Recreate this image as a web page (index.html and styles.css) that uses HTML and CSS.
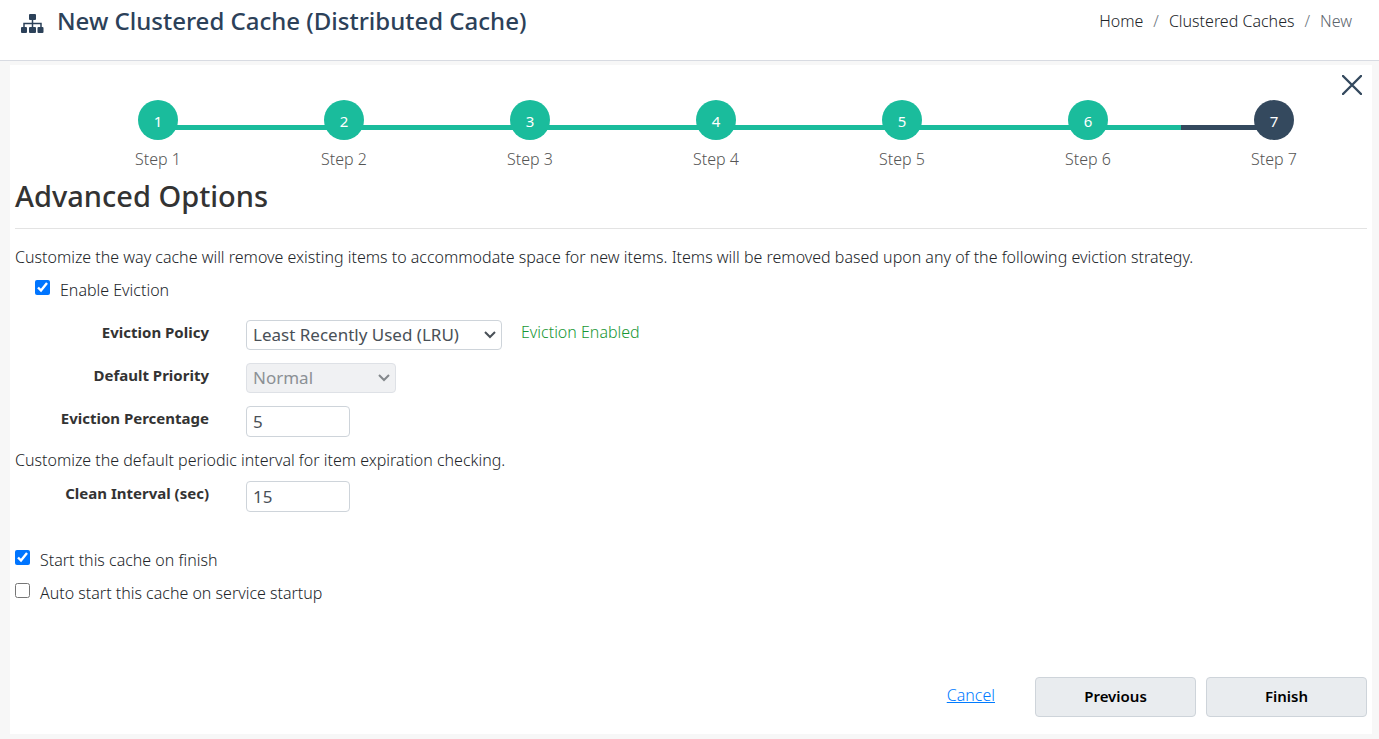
FILE: index.html
```html
<!DOCTYPE html>
<html lang="en">
<head>
<meta charset="utf-8">
<title>New Clustered Cache</title>
<link rel="stylesheet" href="styles.css">
</head>
<body>
<header class="topbar">
  <h1 class="page-title">
    <svg class="title-icon" viewBox="0 0 24 21" aria-hidden="true">
      <rect x="9" y="0" width="7" height="6" rx="1"/>
      <path d="M12.500 6v7M4 13V9.500h17V13" fill="none" stroke="#2c4159" stroke-width="1.500"/>
      <rect x="1" y="13" width="6" height="6" rx="1"/>
      <rect x="9" y="13" width="7" height="6" rx="1"/>
      <rect x="17.500" y="13" width="6" height="6" rx="1"/>
    </svg>
    New Clustered Cache (Distributed Cache)
  </h1>
  <nav aria-label="Breadcrumb">
    <ol class="breadcrumb">
      <li><a href="#">Home</a></li>
      <li><a href="#">Clustered Caches</a></li>
      <li class="current" aria-current="page">New</li>
    </ol>
  </nav>
</header>
<main class="card">
  <button class="close" type="button" aria-label="Close">
    <svg viewBox="0 0 20 20" aria-hidden="true"><path d="M1 1L19 19M19 1L1 19"/></svg>
  </button>
  <ol class="steps">
    <li class="step"><span class="dot">1</span><span>Step 1</span></li>
    <li class="step"><span class="dot">2</span><span>Step 2</span></li>
    <li class="step"><span class="dot">3</span><span>Step 3</span></li>
    <li class="step"><span class="dot">4</span><span>Step 4</span></li>
    <li class="step"><span class="dot">5</span><span>Step 5</span></li>
    <li class="step"><span class="dot">6</span><span>Step 6</span></li>
    <li class="step active" aria-current="step"><span class="dot">7</span><span>Step 7</span></li>
  </ol>
  <h2 class="section-title">Advanced Options</h2>
  <form class="options">
    <p class="intro">Customize the way cache will remove existing items to accommodate space for new items. Items will be removed based upon any of the following eviction strategy.</p>
    <div class="check indented">
      <input type="checkbox" id="eviction" checked>
      <label for="eviction">Enable Eviction</label>
    </div>
    <div class="fields">
      <div class="field">
        <label for="policy">Eviction Policy</label>
        <select id="policy" class="control wide"><option>Least Recently Used (LRU)</option></select>
        <span class="status">Eviction Enabled</span>
      </div>
      <div class="field">
        <label for="priority">Default Priority</label>
        <select id="priority" class="control medium" disabled><option>Normal</option></select>
      </div>
      <div class="field">
        <label for="percentage">Eviction Percentage</label>
        <input id="percentage" class="control narrow" type="text" value="5">
      </div>
    </div>
    <p class="intro">Customize the default periodic interval for item expiration checking.</p>
    <div class="fields interval">
      <div class="field">
        <label for="interval">Clean Interval (sec)</label>
        <input id="interval" class="control narrow" type="text" value="15">
      </div>
    </div>
    <div class="start-options">
      <div class="check">
        <input type="checkbox" id="start" checked>
        <label for="start">Start this cache on finish</label>
      </div>
      <div class="check">
        <input type="checkbox" id="autostart">
        <label for="autostart">Auto start this cache on service startup</label>
      </div>
    </div>
    <div class="actions">
      <a class="cancel" href="#">Cancel</a>
      <button class="btn" type="button">Previous</button>
      <button class="btn" type="button">Finish</button>
    </div>
  </form>
</main>
</body>
</html>
```
FILE: styles.css
```css
* { box-sizing: border-box; }

body {
  margin: 0;
  min-height: 100vh;
  display: flex;
  flex-direction: column;
  background: #f7f7f7;
  color: #212529;
  font: 300 16px/24px "Noto Sans", "Open Sans", sans-serif;
}

h1, h2, p, ol { margin: 0; padding: 0; }
ol { list-style: none; }

.topbar {
  display: flex;
  justify-content: space-between;
  align-items: flex-start;
  height: 61px;
  padding: 6px 27px 0 20px;
  background: #fff;
  border-bottom: 1px solid #d8dbe2;
}

.page-title {
  display: flex;
  align-items: center;
  gap: 13px;
  color: #2c4159;
  font-size: 24px;
  font-weight: 500;
  line-height: 30px;
}

.title-icon {
  width: 24px;
  height: 21px;
  margin-top: 7px;
  fill: #2c4159;
}

.breadcrumb {
  display: flex;
  padding-top: 3px;
}

.breadcrumb a {
  color: #212529;
  text-decoration: none;
}

.breadcrumb li + li::before {
  content: "/";
  padding: 0 10px;
  color: #6c757d;
}

.breadcrumb .current { color: #5c656d; }

.card {
  position: relative;
  flex: 1;
  display: flex;
  flex-direction: column;
  margin: 4px 7px 5px 10px;
  padding: 35px 5px 17px;
  background: #fff;
}

.close {
  position: absolute;
  top: 10px;
  right: 10px;
  width: 20px;
  height: 20px;
  padding: 0;
  border: 0;
  background: none;
  cursor: pointer;
}

.close svg {
  display: block;
  fill: none;
  stroke: #34495e;
  stroke-width: 2.4;
  stroke-linecap: round;
}

.steps {
  display: grid;
  grid-template-columns: repeat(7, 1fr);
  padding-left: 50px;
  color: #555;
}

.step {
  display: flex;
  flex-direction: column;
  align-items: center;
  gap: 7px;
  background: linear-gradient(#1abc9c, #1abc9c) 0 25px / 100% 5px no-repeat;
}

.step:first-child {
  background-position: 100% 25px;
  background-size: 50% 5px;
}

.step.active {
  background-image: linear-gradient(#34495e, #34495e);
  background-size: 50% 5px;
}

.dot {
  width: 40px;
  height: 40px;
  border-radius: 50%;
  background: #1abc9c;
  color: #fff;
  font-size: 15px;
  font-weight: 400;
  line-height: 42px;
  text-align: center;
}

.active .dot { background: #34495e; }

.section-title {
  padding: 6px 0 13px;
  border-bottom: 1px solid #e3e3e3;
  color: #333;
  font-size: 29px;
  font-weight: 500;
  line-height: 38px;
}

.options {
  flex: 1;
  display: flex;
  flex-direction: column;
  padding-top: 16px;
}

.check {
  display: flex;
  gap: 10px;
  margin-top: 9px;
}

.check input {
  width: 15px;
  height: 15px;
  margin: 2px 0 0;
  accent-color: #0075ff;
}

.indented { padding-left: 20px; }

.fields {
  display: grid;
  gap: 13px;
  margin: 18px 0 11px;
}

.fields.interval { margin: 9px 0 0; }

.field {
  display: flex;
  align-items: flex-start;
}

.field label {
  width: 194px;
  margin-right: 37px;
  color: #333;
  font-size: 15px;
  font-weight: 700;
  text-align: right;
}

.control {
  height: 30px;
  border: 1px solid #ced4da;
  border-radius: 4px;
  background-color: #fff;
  color: #495057;
  font: inherit;
  font-size: 17px;
  font-weight: 400;
}

select.control {
  appearance: none;
  padding: 0 24px 0 6px;
  background-image: url("data:image/svg+xml,%3Csvg xmlns='http://www.w3.org/2000/svg' width='12' height='8' fill='none' stroke='%23495057' stroke-width='2'%3E%3Cpath d='M1 1l5 5 5-5'/%3E%3C/svg%3E");
  background-position: right 5px center;
  background-repeat: no-repeat;
}

input.control {
  height: 31px;
  padding: 0 6px;
}

select.control:disabled {
  border-color: #dee1e6;
  background-color: #f0f1f3;
  background-image: url("data:image/svg+xml,%3Csvg xmlns='http://www.w3.org/2000/svg' width='12' height='8' fill='none' stroke='%2384888c' stroke-width='2'%3E%3Cpath d='M1 1l5 5 5-5'/%3E%3C/svg%3E");
  color: #8b9095;
  opacity: 1;
}

.wide { width: 256px; }
.medium { width: 150px; }
.narrow { width: 104px; }

.status {
  margin-left: 19px;
  color: #189735;
}

.start-options { margin-top: 27px; }

.actions {
  display: flex;
  justify-content: flex-end;
  gap: 10px;
  margin-top: auto;
}

.cancel {
  margin: 6px 30px 0 0;
  color: #007bff;
}

.btn {
  width: 161px;
  height: 40px;
  padding: 0 0 2px;
  border: 1px solid #ced4da;
  border-radius: 4px;
  background: #e9ecef;
  color: #000;
  font: inherit;
  font-size: 15px;
  font-weight: 600;
}
```
